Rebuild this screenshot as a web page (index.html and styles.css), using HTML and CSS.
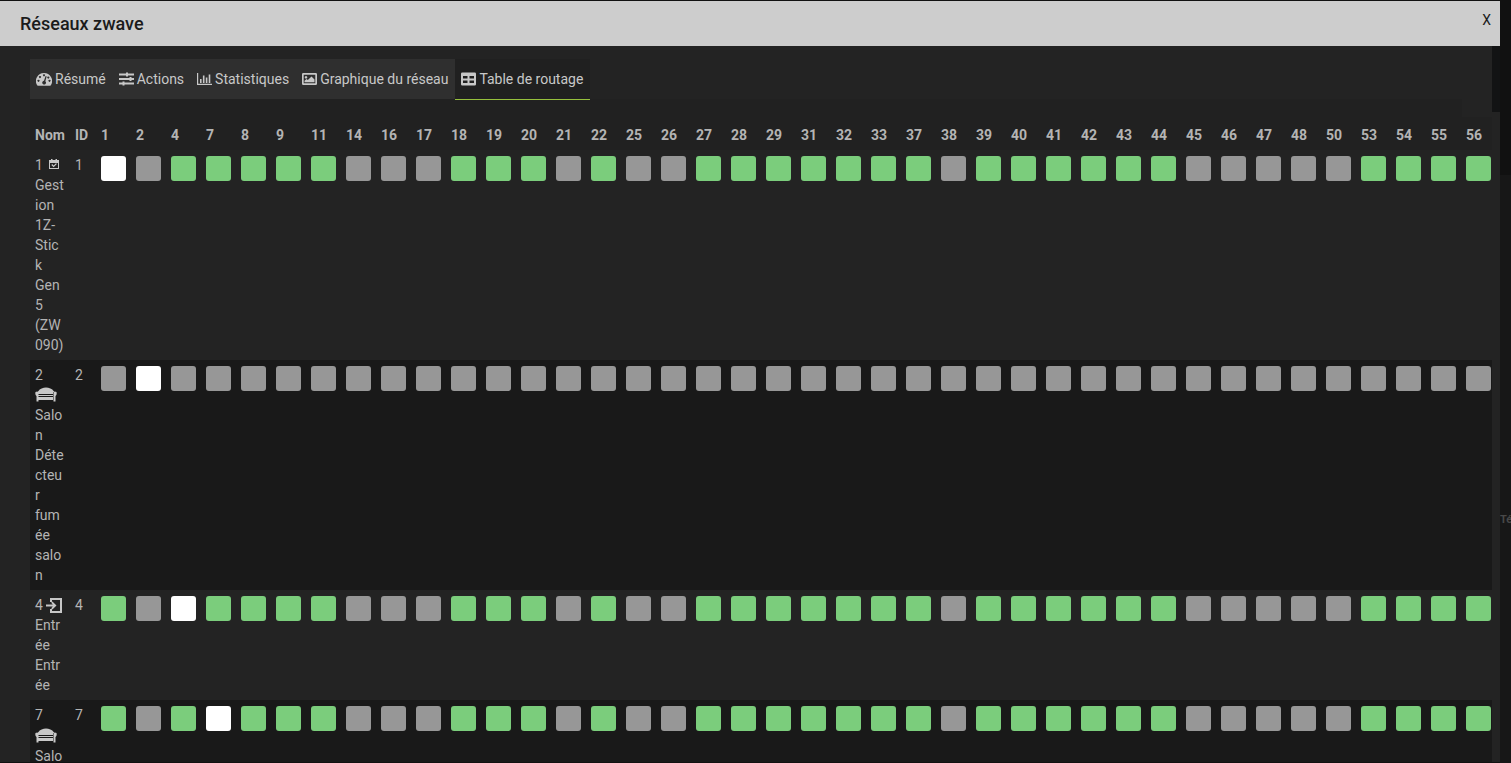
FILE: index.html
```html
<!DOCTYPE html>
<html lang="fr">
<head>
<meta charset="utf-8">
<title>Réseaux zwave</title>
<link rel="stylesheet" href="styles.css">
</head>
<body>
<svg class="symbols" aria-hidden="true">
  <symbol id="i-gauge" viewBox="0 0 16 14"><path fill="currentColor" fill-rule="evenodd" d="M8 1a8 8 0 0 1 7 12q-.2.7-1 .7H2q-.8 0-1-.7A8 8 0 0 1 8 1ZM8 2.200a1 1 0 1 0 .01 0ZM4 4a1 1 0 1 0 .01 0ZM2.500 7.800a1 1 0 1 0 .01 0ZM13.500 7.800a1 1 0 1 0 .01 0ZM12.300 4.500a1 1 0 1 0 .01 0ZM9.600 4 8 8.800a1.900 1.900 0 1 0 1.300.4L10.700 4.400Z"/></symbol>
  <symbol id="i-sliders" viewBox="0 0 15 14"><path fill="currentColor" d="M0 1.500h15v2H0ZM0 6h15v2H0ZM0 10.500h15v2H0ZM7 .5h2v4H7ZM10.500 5h2v4h-2ZM3.500 9.500h2v4h-2Z"/></symbol>
  <symbol id="i-chart" viewBox="0 0 15 14"><path fill="currentColor" d="M0 1h1.200v10.800H15V13H0ZM3 7h1.600v4H3ZM5.900 3.500h1.600V11H5.900ZM8.800 5.500h1.600V11H8.800ZM11.700 2.500h1.600V11h-1.600Z"/></symbol>
  <symbol id="i-image" viewBox="0 0 15 14"><path fill="currentColor" fill-rule="evenodd" d="M1.300 1h12.400Q15 1 15 2.300v9.400q0 1.300-1.300 1.300H1.300Q0 13 0 11.700V2.300Q0 1 1.300 1ZM1.700 2.700v8.600h11.600V2.700ZM4 4a1.300 1.300 0 1 0 .01 0ZM2.500 10.300V8.700l2-1.700 1.300 1L9.500 4.500l3 3v2.800Z"/></symbol>
  <symbol id="i-table" viewBox="0 0 15 14"><path fill="currentColor" fill-rule="evenodd" d="M1.300.5h12.400Q15 .5 15 1.800v10.400q0 1.300-1.300 1.300H1.300Q0 13.500 0 12.200V1.800Q0 .5 1.300.5ZM2 4v2.500h4.500V4ZM8.500 4v2.500H13V4ZM2 8.500V11h4.500V8.500ZM8.500 8.500V11H13V8.500Z"/></symbol>
  <symbol id="i-calendar" viewBox="0 0 10 10"><path fill="currentColor" fill-rule="evenodd" d="M0 1h2V0h1.500v1h3V0H8v1h2v9H0ZM1 4v5h8V4ZM2.300 6l.9-.9 1.400 1.300L7 4.200l.9.9L4.600 8.300Z"/></symbol>
  <symbol id="i-sofa" viewBox="0 0 22 15"><path fill="currentColor" d="M3 4.500C5 1.500 8 .5 11 .5s6 1 8 4V7H3ZM.5 5q1.700-1 3 0v9.500h-2V9Q-.2 8 .5 5ZM21.500 5q-1.700-1-3 0v9.500h2V9q1.700-1 1-4ZM3 8h16v1H3ZM3 10h16v3H3Z"/></symbol>
  <symbol id="i-enter" viewBox="0 0 16 15"><path fill="currentColor" d="M4 0h12v15H4v-4h2v2h8V2H6v2H4ZM0 6.600h6.800L5.200 4.800l1.200-1.200L10.500 7.500l-4.100 4-1.200-1.200 1.600-1.900H0Z"/></symbol>
</svg>
<div class="backdrop"><span class="backdrop-label">Té</span></div>
<main class="dialog">
  <header class="titlebar">
    <h1 class="title">Réseaux zwave</h1>
    <button class="close" aria-label="Fermer" type="button">X</button>
  </header>
  <div class="body">
    <div class="content">
      <nav class="tabs">
        <a class="tab" href="#resume"><svg class="icon icon-gauge"><use href="#i-gauge"/></svg>Résumé</a>
        <a class="tab" href="#actions"><svg class="icon"><use href="#i-sliders"/></svg>Actions</a>
        <a class="tab" href="#stats"><svg class="icon"><use href="#i-chart"/></svg>Statistiques</a>
        <a class="tab" href="#graph"><svg class="icon"><use href="#i-image"/></svg>Graphique du réseau</a>
        <a class="tab active" href="#routes"><svg class="icon"><use href="#i-table"/></svg>Table de routage</a>
      </nav>
      <section class="panel">
        <table class="routes">
          <thead><tr id="head"><th class="name">Nom</th><th class="id">ID</th></tr></thead>
          <tbody id="rows"></tbody>
        </table>
      </section>
    </div>
    <div class="scrollbar"><div class="thumb"></div></div>
  </div>
</main>
<script src="routes.js"></script>
</body>
</html>
```
FILE: styles.css
```css
* { box-sizing: border-box; }
body {
  margin: 0;
  height: 100vh;
  overflow: hidden;
  background: #171717;
  color: #b4b4b4;
  font: 14px/20px Roboto, sans-serif;
}
.symbols { display: none; }
.backdrop {
  position: absolute;
  top: 0;
  right: 0;
  width: 11px;
  height: 100%;
  padding-top: 508px;
  overflow: hidden;
  background: linear-gradient(#111 175px, #171717 175px);
}
.backdrop-label { color: #484848; font-size: 11px; font-weight: 700; }
.dialog {
  display: flex;
  flex-direction: column;
  height: 100vh;
  margin-right: 11px;
  border-top: 1px solid #111;
  border-bottom: 1px solid #111;
  background: #232323;
}
.titlebar {
  display: flex;
  flex: none;
  align-items: center;
  justify-content: space-between;
  height: 45px;
  padding: 0 9px 0 20px;
  background: #cdcdcd;
  color: #1b1b1b;
}
.title { margin: 0; font-size: 18px; font-weight: 500; }
.close {
  padding: 0 0 8px;
  border: 0;
  background: none;
  color: #1b1b1b;
  font: inherit;
}
.body { display: flex; flex: 1; min-height: 0; }
.content { flex: 1; min-width: 0; overflow: hidden; padding: 13px 30px 0; }
.scrollbar { flex: none; width: 8px; background: #232323; }
.thumb { height: 66px; background: #121314; }
.tabs { display: flex; height: 40px; }
.tab {
  display: flex;
  align-items: center;
  gap: 3px;
  height: 40px;
  padding: 0 7px 0 6px;
  background: #2f2f2f;
  color: #c8c8c8;
  text-decoration: none;
  white-space: nowrap;
}
.tab.active {
  height: 41px;
  border-bottom: 1px solid #96c03d;
  background: #202020;
}
.icon { flex: none; width: 15px; height: 14px; }
.icon-gauge { width: 16px; }
.panel { padding-top: 18px; background: #212121; }
.routes {
  table-layout: fixed;
  width: 1466px;
  border-collapse: collapse;
  background: #232323;
}
.routes thead { background: #212121; }
.routes th, .routes td {
  width: 35px;
  padding: 5px;
  text-align: left;
  vertical-align: top;
}
.routes th { height: 33px; padding-top: 8px; font-weight: 700; }
.routes .name { width: 40px; overflow-wrap: anywhere; }
.routes .id { width: 26px; }
.routes tbody tr:nth-child(even) { background: #191919; }
.link {
  display: block;
  width: 25px;
  height: 25px;
  margin-top: 1px;
  border-radius: 3px;
  background: #979797;
}
.link.direct { background: #7bcd7c; }
.link.self { background: #fff; }
.room { color: #c8c8c8; vertical-align: middle; }
.calendar { width: 10px; height: 10px; margin: 0 3px 4px; }
.sofa { width: 22px; height: 15px; margin-bottom: 3px; }
.enter { width: 16px; height: 15px; margin-bottom: 2px; }
```
FILE: routes.js
```js
const ids = [1, 2, 4, 7, 8, 9, 11, 14, 16, 17, 18, 19, 20, 21, 22, 25, 26, 27, 28, 29,
  31, 32, 33, 37, 38, 39, 40, 41, 42, 43, 44, 45, 46, 47, 48, 50, 53, 54, 55, 56];
const unreachable = new Set([2, 14, 16, 17, 21, 25, 26, 38, 45, 46, 47, 48, 50]);
const nodes = [
  { id: 1, icon: "calendar", name: "Gestion 1Z-Stick Gen5 (ZW090)" },
  { id: 2, icon: "sofa", name: "Salon Détecteur fumée salon" },
  { id: 4, icon: "enter", name: "Entrée Entrée" },
  { id: 7, icon: "sofa", name: "Salo" }
];

function linkClass(from, to) {
  if (from === to) return "link self";
  return unreachable.has(from) || unreachable.has(to) ? "link" : "link direct";
}

document.getElementById("head").insertAdjacentHTML("beforeend",
  ids.map(id => `<th>${id}</th>`).join(""));

document.getElementById("rows").innerHTML = nodes.map(n => `<tr>
  <td class="name">${n.id} <svg class="room ${n.icon}"><use href="#i-${n.icon}"/></svg> ${n.name}</td>
  <td>${n.id}</td>${ids.map(id => `<td><span class="${linkClass(n.id, id)}"></span></td>`).join("")}
</tr>`).join("");
```
